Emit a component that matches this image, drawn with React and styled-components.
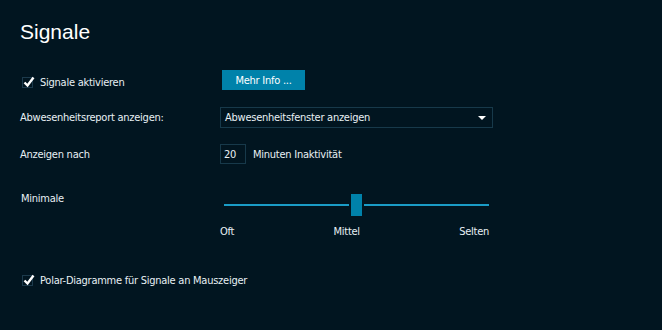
import React from 'react';
import styled, { createGlobalStyle } from 'styled-components';

/* ****************** */
/* Styled Components */
/* ****************** */
const GlobalStyle = createGlobalStyle`
    html, body {
        margin: 0;
        padding: 0;
        background: #011520;
    }
`;

const Page = styled.div`
    width: 662px;
    height: 330px;
    box-sizing: border-box;
    padding: 20px 0 0 20px;
    background: #011520;
    color: #e8f0f4;
    font-family: "DejaVu Sans Condensed", "DejaVu Sans", sans-serif;
    font-size: 11px;
    letter-spacing: -0.25px;
    overflow: hidden;
`;

const Title = styled.h1`
    margin: 0;
    height: 24px;
    font-family: "Liberation Sans", Arial, sans-serif;
    font-weight: normal;
    font-size: 21px;
    line-height: 24px;
    letter-spacing: 0;
    color: #ffffff;
`;

const Row = styled.div`
    display: grid;
    grid-template-columns: 200px 280px;
    align-items: center;
    height: ${p => p.h}px;
    margin-top: ${p => p.mt}px;
`;

const Label = styled.div`
    padding-left: ${p => p.indent || 0}px;
    white-space: nowrap;
`;

const TopLabel = styled(Label)`
    align-self: start;
    margin-top: 1px;
`;

const CheckLabel = styled.label`
    display: flex;
    align-items: center;
    gap: 7px;
    padding-left: 2px;
    padding-top: ${p => p.drop || 0}px;
    white-space: nowrap;
`;

const Box = styled.span`
    width: 11px;
    height: 11px;
    box-sizing: border-box;
    border: 1px solid #1c3a4c;
    position: relative;
    flex: none;
`;

const Tick = styled.svg`
    position: absolute;
    left: -1px;
    top: -3px;
`;

const Button = styled.button`
    margin-left: 2px;
    width: 83px;
    height: 20px;
    padding: 0;
    border: none;
    background: #0082aa;
    color: #ffffff;
    font: inherit;
    font-size: 11px;
    letter-spacing: -0.25px;
`;

const Select = styled.div`
    width: 273px;
    height: 21px;
    box-sizing: border-box;
    border: 1px solid #17394a;
    display: flex;
    align-items: center;
    justify-content: space-between;
    padding: 0 6px 0 4px;
`;

const Caret = styled.span`
    width: 0;
    height: 0;
    border-left: 4px solid transparent;
    border-right: 4px solid transparent;
    border-top: 4px solid #ffffff;
`;

const Inline = styled.div`
    display: flex;
    align-items: center;
    gap: 7px;
`;

const NumberBox = styled.div`
    width: 26px;
    height: 20px;
    box-sizing: border-box;
    border: 1px solid #17394a;
    padding-left: 3px;
    display: flex;
    align-items: center;
`;

const SliderWrap = styled.div`
    width: 270px;
    display: flex;
    flex-direction: column;
`;

const Track = styled.div`
    position: relative;
    margin-left: 4px;
    width: 265px;
    height: 22px;
    display: flex;
    align-items: center;
    &::before {
        content: '';
        display: block;
        width: 100%;
        height: 2px;
        background: #1a9cc6;
    }
`;

const Thumb = styled.div`
    position: absolute;
    top: 0;
    width: 11px;
    height: 22px;
    background: #0082aa;
    box-shadow: 0 0 0 2px #011520;
`;

const Ticks = styled.div`
    display: flex;
    justify-content: space-between;
    margin-top: 9px;
    width: 269px;
`;

/* ****************** */
/*     Component      */
/* ****************** */
const Check = ({ children, drop }) => (
    <CheckLabel drop={drop}>
        <Box>
            <Tick width="14" height="14" viewBox="0 0 14 14">
                <path d="M2.5 7.5 L5.5 10.5 L11.5 2.5" fill="none" stroke="#ffffff" strokeWidth="2.4" />
            </Tick>
        </Box>
        {children}
    </CheckLabel>
);

class App extends React.Component {
    render() {
        return (
            <Page>
                <GlobalStyle />
                <Title>Signale</Title>
                <Row h={20} mt={26}>
                    <Check drop={5}>Signale aktivieren</Check>
                    <div><Button>Mehr Info ...</Button></div>
                </Row>
                <Row h={21} mt={17}>
                    <Label>Abwesenheitsreport anzeigen:</Label>
                    <Select>
                        <span>Abwesenheitsfenster anzeigen</span>
                        <Caret />
                    </Select>
                </Row>
                <Row h={20} mt={16}>
                    <Label>Anzeigen nach</Label>
                    <Inline>
                        <NumberBox>20</NumberBox>
                        <span>Minuten Inaktivität</span>
                    </Inline>
                </Row>
                <Row h={50} mt={27}>
                    <TopLabel indent={1}>Minimale</TopLabel>
                    <SliderWrap>
                        <Track>
                            <Thumb style={{ left: 127 }} />
                        </Track>
                        <Ticks>
                            <span>Oft</span>
                            <span>Mittel</span>
                            <span>Selten</span>
                        </Ticks>
                    </SliderWrap>
                </Row>
                <Row h={14} mt={32}>
                    <Check>Polar-Diagramme für Signale an Mauszeiger</Check>
                </Row>
            </Page>
        );
    }
}

export default App;
